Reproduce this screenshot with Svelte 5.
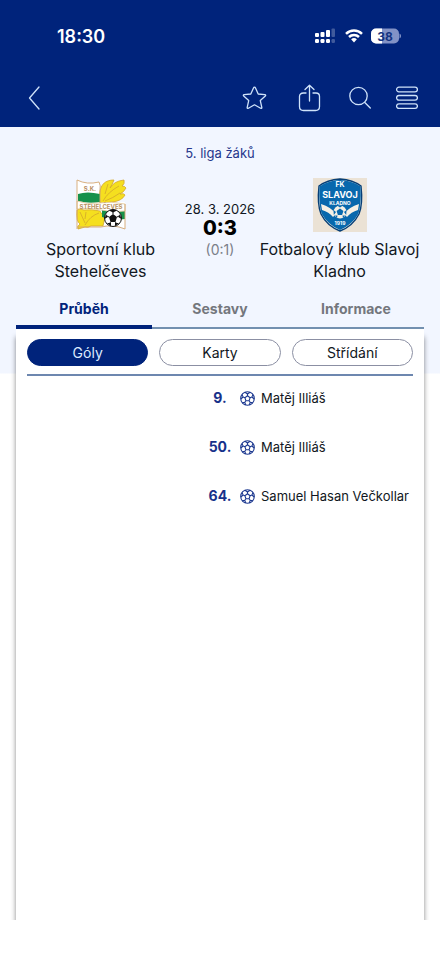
<script>
  // Main sections of the match detail
  const tabs = ["Průběh", "Sestavy", "Informace"];
  // Event types in the match timeline
  const filters = ["Góly", "Karty", "Střídání"];

  // Goals of the away team
  const goals = [
    { minute: 9, player: "Matěj Illiáš" },
    { minute: 50, player: "Matěj Illiáš" },
    { minute: 64, player: "Samuel Hasan Večkollar" },
  ];

  let activeTab = "Průběh";
  let activeFilter = "Góly";

  $: visibleEvents =
    activeTab === "Průběh" && activeFilter === "Góly" ? goals : [];
</script>

<div class="page">
  <header>
    <div class="status">
      <span class="time">18:30</span>
      <div class="indicators">
        <!-- Signal -->
        <svg width="22" height="16" viewBox="0 0 22 16" fill="#fff">
          <rect x="0" y="5" width="4" height="4" rx="1" />
          <rect x="5.5" y="4" width="4" height="5" rx="1" />
          <rect x="11" y="2" width="4" height="7" rx="1" />
          <rect x="16.5" y="0.5" width="3.5" height="8.5" rx="1" opacity=".25" />
          <rect x="0" y="11" width="4" height="4" rx="1.2" />
          <rect x="5.5" y="11" width="4" height="4" rx="1.2" />
          <rect x="11" y="11" width="4" height="4" rx="1.2" />
          <rect x="16.5" y="11" width="3.5" height="4" rx="1.2" opacity=".25" />
        </svg>
        <!-- Wifi -->
        <svg width="18" height="14" viewBox="0 0 18 14" fill="none" stroke="#fff">
          <path d="M1 4.8a11.5 11.5 0 0 1 16 0" stroke-width="2.5" />
          <path d="M4 8a7.2 7.2 0 0 1 10 0" stroke-width="2.5" />
          <path d="M6.1 10.3a4.2 4.2 0 0 1 5.8 0L9 13.4z" fill="#fff" stroke="none" />
        </svg>
        <!-- Battery -->
        <svg width="30" height="16" viewBox="0 0 30 16">
          <rect x="0" y="0.5" width="28" height="15" rx="5" fill="#8292c6" />
          <path d="M11 .5H5A5 5 0 0 0 0 5.5v5a5 5 0 0 0 5 5h6z" fill="#fff" />
          <path d="M28.5 5.5c2 .8 2 4.2 0 5z" fill="#8292c6" />
          <text x="14" y="12.5" text-anchor="middle" font-size="12" font-weight="700" fill="#143482">38</text>
        </svg>
      </div>
    </div>

    <nav class="toolbar">
      <button class="back" aria-label="Zpět">
        <svg width="12" height="26" viewBox="0 0 12 26">
          <path d="M11 2 1.5 13 11 24" />
        </svg>
      </button>
      <button aria-label="Oblíbené">
        <svg width="28" height="26" viewBox="0 0 28 26">
          <path d="M13.5 2.2q.7 0 1 .7l2.7 6.1 6.6.7q1.5.3.5 1.3l-5 4.6 1.5 6.7q.2 1.5-1.2.9l-6.1-3.4-6.1 3.4q-1.4.6-1.2-.9l1.5-6.700-5-4.600q-1-1 .5-1.300l6.600-.7 2.700-6.100q.3-.7 1-.7z" />
        </svg>
      </button>
      <button aria-label="Sdílet">
        <svg width="30" height="28" viewBox="0 0 30 28">
          <path d="M12 9H9.5Q5.5 9 5.5 12.5v10Q5.5 26.5 9.5 26.5h12q4 0 4-4v-10Q25.5 9 22 9h-3" />
          <path d="M15.5 17V1.5M11 5.5 15.5 1.2 20 5.5" />
        </svg>
      </button>
      <button aria-label="Hledat">
        <svg width="22" height="24" viewBox="0 0 22 24">
          <circle cx="9.5" cy="10" r="8.7" />
          <path d="m15.8 16.5 5.5 5.5" />
        </svg>
      </button>
      <button aria-label="Menu">
        <svg width="22" height="24" viewBox="0 0 22 24">
          <rect x=".6" y="1.2" width="20.8" height="4.6" rx="2.3" />
          <rect x=".6" y="9.5" width="20.8" height="4.6" rx="2.3" />
          <rect x=".6" y="17.8" width="20.8" height="4.6" rx="2.3" />
        </svg>
      </button>
    </nav>
  </header>

  <main>
    <a class="league" href="#liga">5. liga žáků</a>

    <section class="match">
      <div class="team">
        <!-- SK Stehelčeves -->
        <svg width="54" height="56" viewBox="0 0 54 56">
          <path d="M3 3q10 5 22 2v20l26 0v26q-12-5-24-2H3z" fill="#fff" />
          <g fill="#f5df1f" stroke="#d3a72c" stroke-width=".8">
            <path d="M26 26C24 10 29 3 40 3q-2 5-4 8 4-7 14-8 1 4-2 6 3 0 4 2-2 4-6 6 4-1 5 1-3 6-13 7z" />
            <path d="M3 33q2-2 7 0 8-1 16 1 1 3 5 6l-2 9H17q-3 2-6 1l-7 2q-1-3 2-5-4-2-3-14z" />
            <path d="M29 24q5-9 16-15M31 24q8-3 15-8M34 7l-3 10M6 35l5 11M12 35l-1 7M25 36q-9 3-14 12" fill="none" />
          </g>
          <path d="M4 17q9-3 22 0v8q-11 2-22-1z" fill="#16914b" />
          <path d="M28 33q11-3 23 0v9q-13 2-23-2z" fill="#16914b" />
          <path d="M3 24q10 4 22 2t26 1v7q-12 2-24-1T3 32z" fill="#fff" stroke="#dfc494" stroke-width=".8" />
          <path d="M3 3q10 5 22 2 2 3 1 9v12M3 3v49M51 27v25q-12-5-24-2H3" fill="none" stroke="#d5a772" stroke-width=".9" />
          <text x="16" y="14" text-anchor="middle" font-size="6" font-weight="700" fill="#b88d5f">S.K.</text>
          <text x="27" y="32" text-anchor="middle" font-size="6" font-weight="700" fill="#b9925f">STEHELČEVES</text>
          <circle cx="39" cy="41" r="8.5" fill="#fff" stroke="#111" />
          <path d="m39 37 4 3-1.5 5h-5L35 40zM35 33.5q4-2 8 0L39 35.5zM46 37l1.3 5-3-2zM45 46l-4 3.2V46zM33 46l4 3.2V46zM32 37l-1.3 5 3-2z" fill="#111" />
          <path d="M39 37v-2M43 40l2-1M41.5 45l1 2M36.5 45l-1 2M35 40l-2-1" stroke="#111" />
        </svg>
        <h2>Sportovní klub Stehelčeves</h2>
      </div>

      <div class="result">
        <time datetime="2026-03-28">28. 3. 2026</time>
        <strong>0:3</strong>
        <span>(0:1)</span>
      </div>

      <div class="team">
        <!-- FK Slavoj Kladno -->
        <svg width="54" height="56" viewBox="0 0 54 56">
          <rect x="0" y="1" width="54" height="54" fill="#ebe2d5" />
          <path d="M27 2Q40 3 48 9q2 18-2 28-6 12-19 17Q14 49 8 37 4 27 6 9 14 3 27 2z" fill="#f2eee3" stroke="#073f77" stroke-width="1.4" />
          <path d="M27 3q12 .5 20.5 6.5 1 17-2 27-6 11-18.5 16.5Q15 48 8.5 36.5 5.5 26 6.5 9.5 15 3.5 27 3z" fill="#0868ad" />
          <path d="M8 27q10 3 15 10l-3 3Q16 35 9 33zM46 27q-10 3-15 10l3 3q4-5 11-7z" fill="#f5f0e5" />
          <circle cx="27" cy="35" r="6.5" fill="#f5f0e5" />
          <path d="m27 31.500 3.400 2.500-1.300 4h-4.200l-1.300-4z" fill="#0868ad" />
          <path d="M24 28.500h6l-3 2zM33.500 33l-.3 5-2.200-3zM20.500 33l.3 5 2.200-3zM24 41l.5-2.500L22 38.500zM30 41l-.5-2.500 2.500 0z" fill="#0868ad" />
          <g text-anchor="middle" fill="#fff" font-weight="700">
            <text x="27" y="10" font-size="7">FK</text>
            <text x="27" y="21" font-size="9">SLAVOJ</text>
            <text x="27" y="28" font-size="5">KLADNO</text>
            <text x="27" y="48" font-size="5">1919</text>
          </g>
        </svg>
        <h2>Fotbalový klub Slavoj Kladno</h2>
      </div>
    </section>

    <div class="tabs" role="tablist">
      {#each tabs as tab (tab)}
        <button
          role="tab"
          aria-selected={activeTab === tab}
          class:active={activeTab === tab}
          on:click={() => (activeTab = tab)}>{tab}</button
        >
      {/each}
    </div>

    <section class="panel">
      <div class="filters">
        {#each filters as filter (filter)}
          <button
            class:active={activeFilter === filter}
            on:click={() => (activeFilter = filter)}>{filter}</button
          >
        {/each}
      </div>

      <ul>
        {#each visibleEvents as event (event.minute)}
          <li>
            <strong>{event.minute}.</strong>
            <span class="player">
              <svg width="15" height="15" viewBox="0 0 15 15" fill="none" stroke="#1f3b91" stroke-width="1.1">
                <circle cx="7.5" cy="7.5" r="6.8" />
                <path d="m7.5 4.8 2.600 1.900-1 3H5.900l-1-3zM7.500 4.800V3M10.100 6.700l1.800-.7M9.100 9.700l1.100 1.600M5.900 9.700l-1.100 1.600M4.900 6.700 3.100 6M5 1.300 7.500 3 10 1.300M13 3.500 11.900 6l2.300 2M12.800 11.500l-2.600-.2-.9 2.700M5.700 14l-.9-2.700-2.600.2M.8 8l2.300-2L2 3.500" />
              </svg>
              {event.player}
            </span>
          </li>
        {/each}
      </ul>
    </section>
  </main>
</div>

<style>
  :global(body) {
    margin: 0;
    background: #fff;
  }

  .page {
    min-height: 100vh;
    display: flex;
    flex-direction: column;
    font-family: Inter, "Liberation Sans", sans-serif;
    color: #111722;
  }

  button {
    padding: 0;
    border: none;
    background: none;
    font: inherit;
    color: inherit;
    cursor: pointer;
  }

  svg {
    display: block;
    flex: none;
  }

  header {
    background: #00237b;
    color: #fff;
  }

  .status {
    display: flex;
    justify-content: space-between;
    align-items: center;
    height: 72px;
    padding: 0 39px 0 57px;
  }

  .time {
    font-size: 18px;
    font-weight: 600;
  }

  .indicators {
    display: flex;
    align-items: center;
    gap: 8px;
  }

  .toolbar {
    display: flex;
    align-items: center;
    gap: 25px;
    height: 52px;
    padding: 0 22px 3px 28px;
  }

  .toolbar svg {
    fill: none;
    stroke: #cfe3fa;
    stroke-width: 1.3;
    stroke-linecap: round;
    stroke-linejoin: round;
  }

  .back {
    margin-right: auto;
  }

  main {
    flex: 1;
    display: flex;
    flex-direction: column;
    padding: 16px 16px 37px;
    background: linear-gradient(#f2f6ff 246px, #fff 247px);
  }

  .league {
    align-self: center;
    font-size: 13px;
    line-height: 20px;
    color: #26378c;
    text-decoration: none;
  }

  .match {
    display: grid;
    grid-template-columns: 1fr 70px 1fr;
    padding-top: 14px;
  }

  .team,
  .result {
    display: flex;
    flex-direction: column;
    align-items: center;
    text-align: center;
  }

  h2 {
    margin: 5px 0 0;
    font-size: 16px;
    font-weight: 400;
    line-height: 22px;
  }

  .result {
    padding-top: 24px;
    white-space: nowrap;
  }

  .result time {
    font-size: 13px;
    line-height: 16px;
  }

  .result strong {
    font-size: 20px;
    font-weight: 800;
    line-height: 22px;
    color: #000;
  }

  .result span {
    font-size: 14px;
    line-height: 22px;
    color: #7b7f89;
  }

  .tabs {
    display: grid;
    grid-template-columns: repeat(3, 1fr);
    margin-top: 6px;
    box-shadow: inset 0 -2px #7390b0;
  }

  .tabs button {
    height: 41px;
    padding-top: 4px;
    border-bottom: 4px solid transparent;
    font-size: 14px;
    font-weight: 700;
    color: #74777d;
  }

  .tabs .active {
    border-bottom-color: #00237b;
    color: #00237b;
  }

  .panel {
    flex: 1;
    padding: 10px 11px 0;
    background: #fff;
    box-shadow: 0 8px 5px #0007;
    clip-path: inset(0 -8px 0 -8px);
  }

  .filters {
    display: grid;
    grid-template-columns: repeat(3, 1fr);
    gap: 11px;
    padding-bottom: 8px;
    border-bottom: 2px solid #6d87af;
  }

  .filters button {
    height: 27px;
    border: 1px solid #8b8fa3;
    border-radius: 14px;
    font-size: 14px;
  }

  .filters .active {
    border-color: #00237b;
    background: #00237b;
    color: #dcebff;
  }

  ul {
    margin: 0;
    padding: 12px 0 0;
    list-style: none;
  }

  li {
    display: grid;
    grid-template-columns: 1fr 40px 1fr;
    align-items: center;
    padding-bottom: 29px;
    font-size: 13px;
    line-height: 20px;
  }

  li strong {
    grid-column: 2;
    font-size: 14px;
    text-align: center;
    color: #17318a;
  }

  .player {
    display: flex;
    align-items: center;
    gap: 6px;
    white-space: nowrap;
  }
</style>
